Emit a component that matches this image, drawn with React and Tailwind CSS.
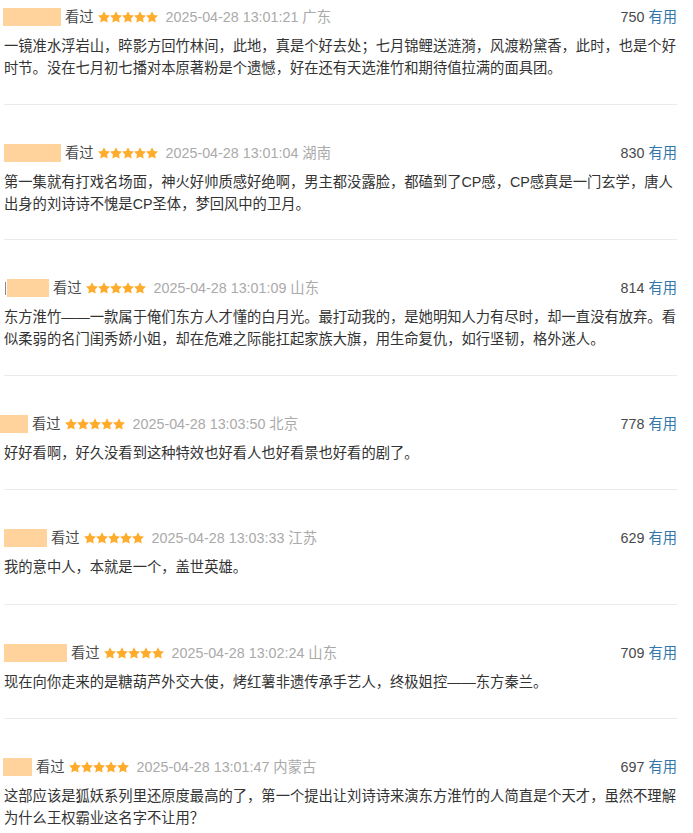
const comments = [
  {
    nameWidth: 58,
    nameLeft: 3,
    time: '2025-04-28 13:01:21',
    place: '广东',
    votes: 750,
    text: '一镜准水浮岩山，睟影方回竹林间，此地，真是个好去处；七月锦鲤送涟漪，风渡粉黛香，此时，也是个好时节。没在七月初七播对本原著粉是个遗憾，好在还有天选淮竹和期待值拉满的面具团。',
  },
  {
    nameWidth: 57,
    nameLeft: 4,
    time: '2025-04-28 13:01:04',
    place: '湖南',
    votes: 830,
    text: '第一集就有打戏名场面，神火好帅质感好绝啊，男主都没露脸，都磕到了CP感，CP感真是一门玄学，唐人出身的刘诗诗不愧是CP圣体，梦回风中的卫月。',
  },
  {
    nameWidth: 42,
    nameLeft: 7,
    mark: true,
    time: '2025-04-28 13:01:09',
    place: '山东',
    votes: 814,
    text: '东方淮竹——一款属于俺们东方人才懂的白月光。最打动我的，是她明知人力有尽时，却一直没有放弃。看似柔弱的名门闺秀娇小姐，却在危难之际能扛起家族大旗，用生命复仇，如行坚韧，格外迷人。',
  },
  {
    nameWidth: 28,
    nameLeft: 0,
    short: true,
    time: '2025-04-28 13:03:50',
    place: '北京',
    votes: 778,
    text: '好好看啊，好久没看到这种特效也好看人也好看景也好看的剧了。',
  },
  {
    nameWidth: 43,
    nameLeft: 4,
    short: true,
    time: '2025-04-28 13:03:33',
    place: '江苏',
    votes: 629,
    text: '我的意中人，本就是一个，盖世英雄。',
  },
  {
    nameWidth: 63,
    nameLeft: 4,
    short: true,
    time: '2025-04-28 13:02:24',
    place: '山东',
    votes: 709,
    text: '现在向你走来的是糖葫芦外交大使，烤红薯非遗传承手艺人，终极姐控——东方秦兰。',
  },
  {
    nameWidth: 29,
    nameLeft: 3,
    time: '2025-04-28 13:01:47',
    place: '内蒙古',
    votes: 697,
    text: '这部应该是狐妖系列里还原度最高的了，第一个提出让刘诗诗来演东方淮竹的人简直是个天才，虽然不理解为什么王权霸业这名字不让用？',
  },
];

function Star() {
  return (
    <svg width="12" height="12" viewBox="0 0 24 24" className="shrink-0">
      <path
        d="M12 .6l3.7 7.4 8.2 1.2-5.9 5.8 1.4 8.2L12 19.3l-7.4 3.9 1.4-8.2L.1 9.2l8.2-1.2z"
        fill="#ffac2d"
      />
    </svg>
  );
}

function Comment({ c, first }) {
  // name boxes are placed relative to the list's 4px left padding
  const boxMargin = c.mark ? c.nameLeft - 6 : c.nameLeft - 4;
  return (
    <div
      className={`border-b border-[#ebebeb] ${c.short ? 'pb-[25.5px]' : 'pb-[24.5px]'} ${first ? 'pt-[7px]' : 'pt-[38px]'}`}
    >
      <div className="flex items-center h-[20px] justify-between">
        <div className="flex items-center">
          {c.mark ? <span className="w-px h-[13px] bg-[#888] ml-[1px]" /> : null}
          <span
            className="h-[18px] bg-[#ffd39b] block"
            style={{ width: c.nameWidth, marginLeft: boxMargin }}
          />
          <span className="ml-[4px] text-[#494949]">看过</span>
          <span className="ml-[4px] flex">
            <Star />
            <Star />
            <Star />
            <Star />
            <Star />
          </span>
          <span className="ml-[8px] text-[#aaa]">
            {c.time} {c.place}
          </span>
        </div>
        <div className="flex items-center">
          <span className="text-[#494949]">{c.votes}</span>
          <span className="ml-[4px] text-[#37a]">有用</span>
        </div>
      </div>
      <p className="mt-[8px] leading-[22px] text-[#333] break-all">{c.text}</p>
    </div>
  );
}

export default function App() {
  return (
    <div
      className="bg-white min-h-[833px] w-[693px] overflow-hidden text-[14.3px] leading-[20px]"
      style={{ fontFamily: '"Liberation Sans", "Noto Sans CJK SC", sans-serif' }}
    >
      <div className="w-[677px] pl-[4px]">
        {comments.map((c, i) => (
          <Comment key={i} c={c} first={i === 0} />
        ))}
      </div>
    </div>
  );
}
